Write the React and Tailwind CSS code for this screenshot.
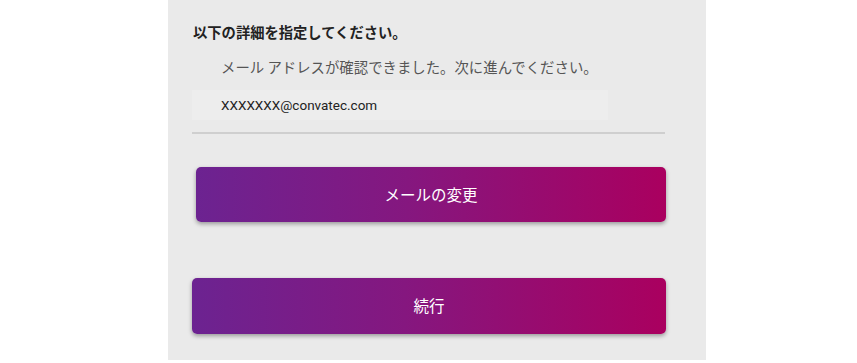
import React from 'react';

const font = { fontFamily: '"Noto Sans CJK JP", "Noto Sans", sans-serif' };

const GradientButton = ({ label, className }) => (
    <button
        className={`h-[55px] rounded-[5px] bg-[linear-gradient(to_right,#6c2391,#85177f_45%,#aa005f)] text-white text-[15.5px] shadow-[0_2px_4px_rgba(0,0,0,0.35)] flex items-center justify-center ${className}`}
    >
        {label}
    </button>
);

const App = () => {
    return (
        <div className="w-full h-[363px] bg-white" style={font}>
            <div className="ml-[168px] w-[538px] h-[360px] bg-[#eaeaea] flex flex-col pt-[22px]">
                <div className="ml-[25px] text-[14.3px] leading-[20px] font-bold text-[#222]">
                    以下の詳細を指定してください。
                </div>
                <div className="ml-[53px] mt-[15px] text-[14.4px] leading-[20px] text-[#555]">
                    メール アドレスが確認できました。次に進んでください。
                </div>
                <div className="ml-[24px] mt-[13px] w-[416px] h-[30px] bg-[#ededed] flex items-center pl-[29px]">
                    <span className="text-[13.5px] text-[#222] font-['Roboto',sans-serif]">XXXXXXX@convatec.com</span>
                </div>
                <div className="ml-[24px] mt-[12px] w-[473px] h-[2px] bg-[#cfcfcf]" />
                <GradientButton label="メールの変更" className="ml-[28px] mt-[33px] w-[470px]" />
                <GradientButton label="続行" className="ml-[24px] mt-[56px] w-[474px] h-[56px]" />
            </div>
        </div>
    );
};

export default App;
